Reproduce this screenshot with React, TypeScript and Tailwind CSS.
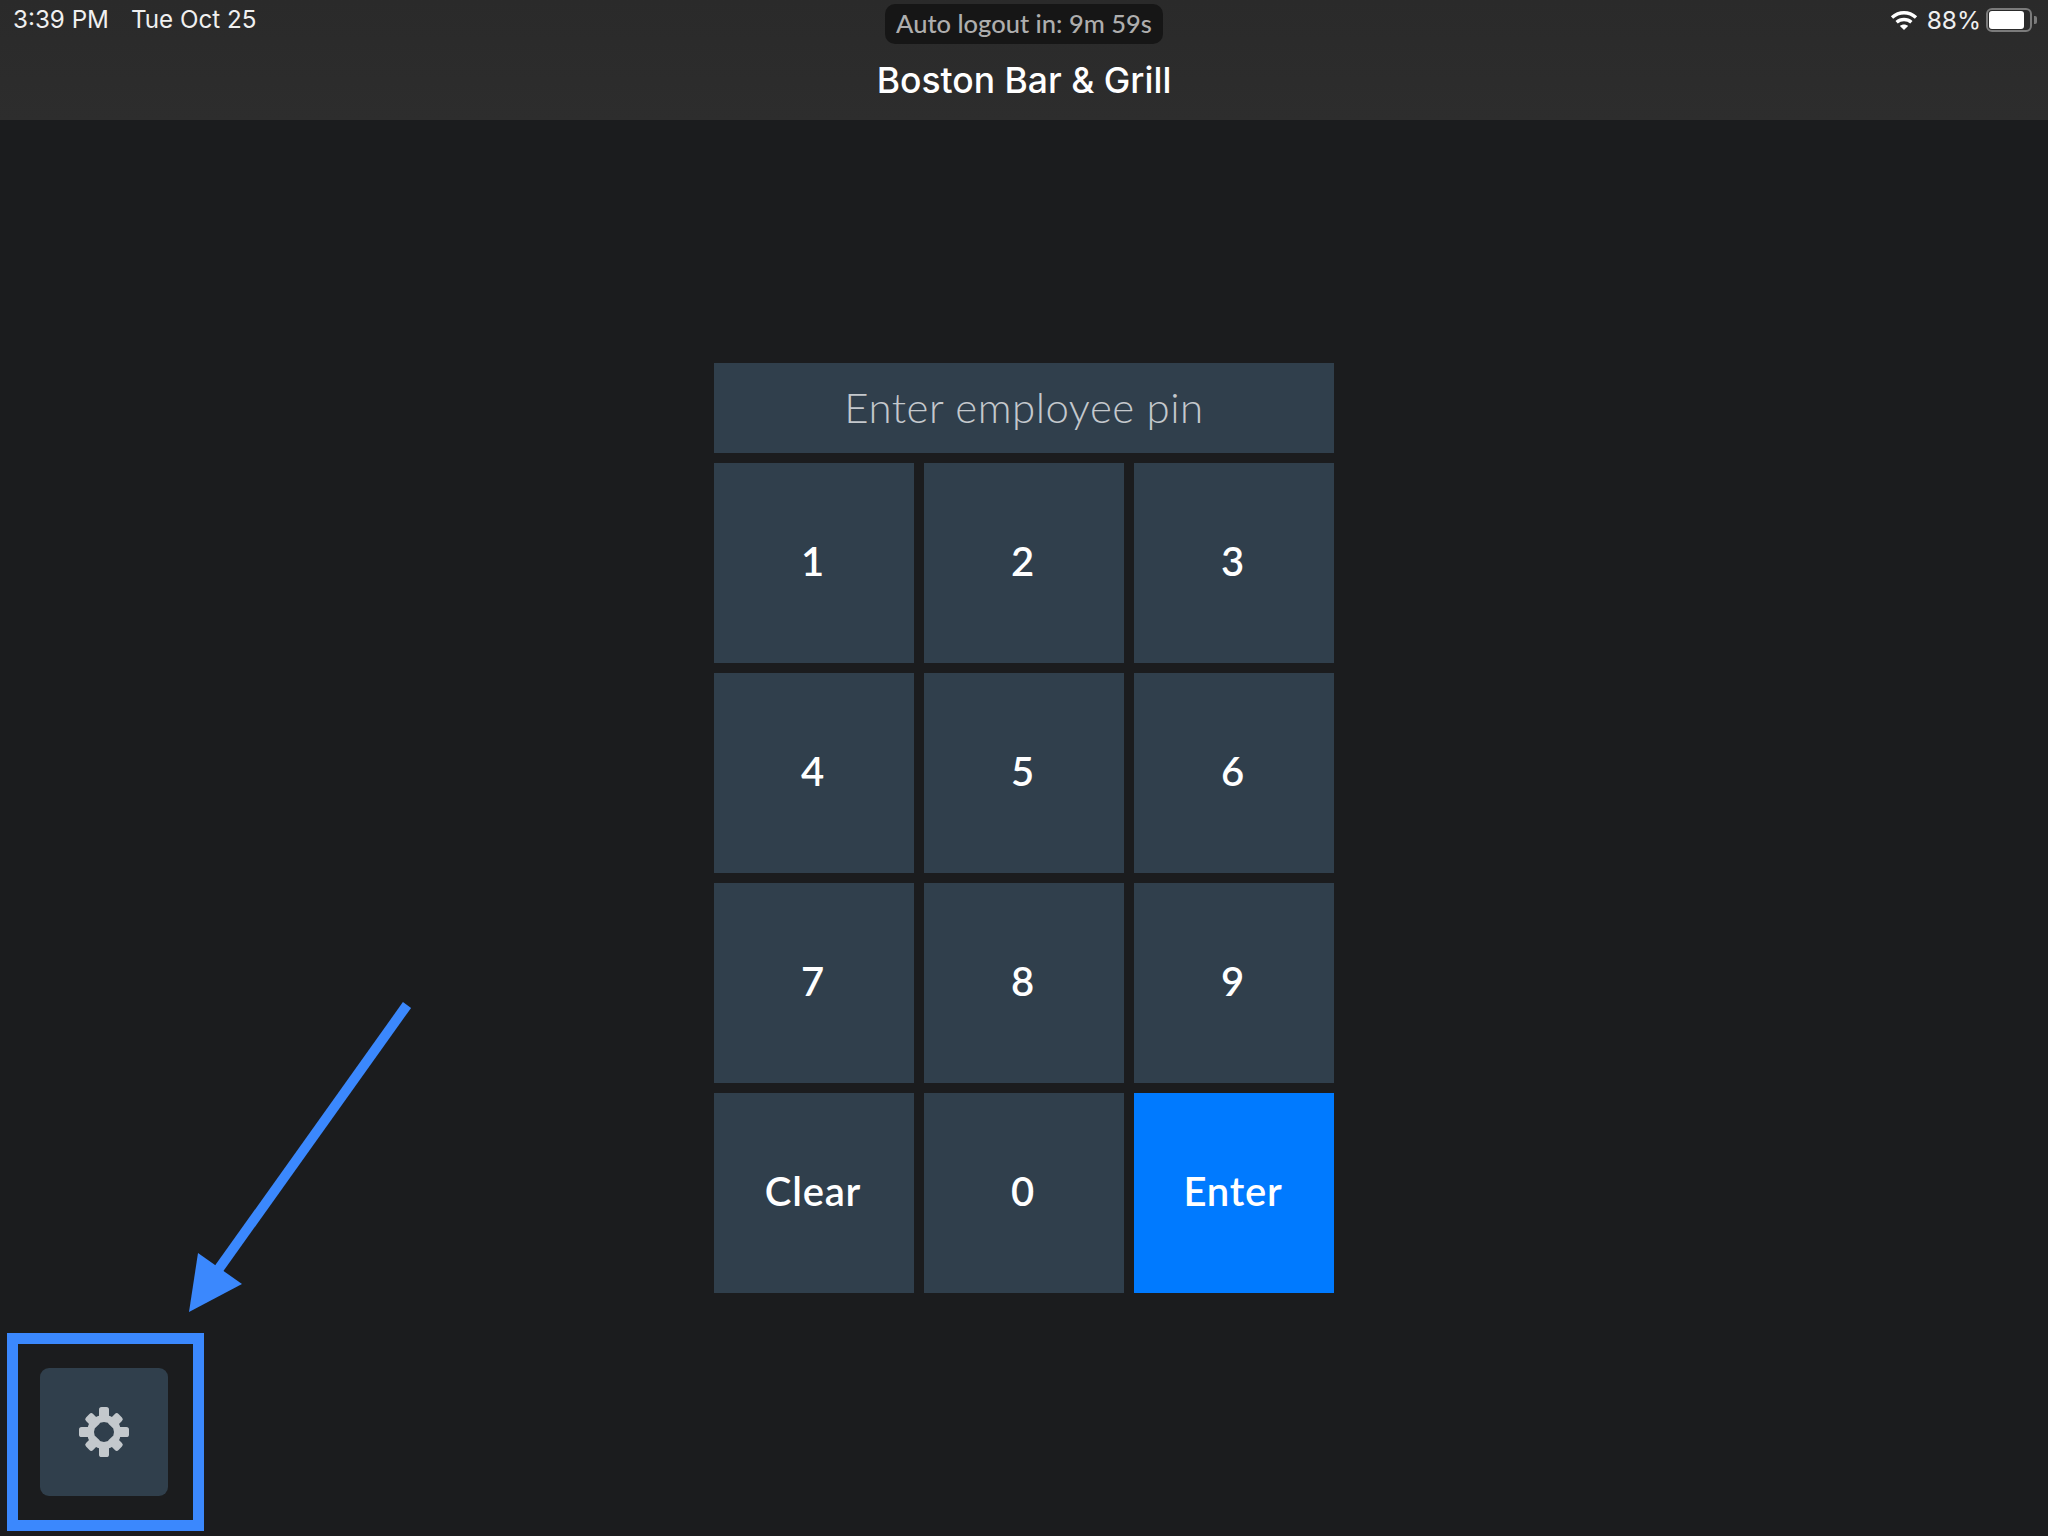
import React from "react";

function Wifi() {
  return (
    <svg width="28" height="22" viewBox="0 0 28 22" fill="none" stroke="#fff" strokeWidth="3.4">
      <path d="M2 8.5C9 2.2 19 2.2 26 8.5" />
      <path d="M6.6 13.2C10.8 9.5 17.2 9.5 21.4 13.2" />
      <path d="M14 21 9.9 16.9c2.3-2 5.9-2 8.2 0Z" fill="#fff" stroke="none" />
    </svg>
  );
}

function Battery() {
  return (
    <div className="ml-[-4px] flex items-center gap-[2px]">
      <div className="h-[24px] w-[46px] rounded-[6px] border-2 border-[#7b7b7b] p-[1px]">
        <div className="h-full w-[35px] rounded-[3px] bg-white" />
      </div>
      <div className="h-[8px] w-[3px] rounded-r-[2px] bg-[#7b7b7b]" />
    </div>
  );
}

function Gear() {
  const straight = [0, 90, 180, 270];
  const diagonal = [45, 135, 225, 315];
  return (
    <svg width="50" height="50" viewBox="0 0 50 50">
      {straight.map((a) => (
        <rect key={a} x="20" y="0" width="10" height="14" rx="2.6" fill="#c3c8cc" transform={`rotate(${a} 25 25)`} />
      ))}
      {diagonal.map((a) => (
        <rect key={a} x="20" y="2" width="10" height="14" rx="2.6" fill="#c3c8cc" transform={`rotate(${a} 25 25)`} />
      ))}
      <circle cx="25" cy="25" r="13.5" fill="none" stroke="#c3c8cc" strokeWidth="7" />
    </svg>
  );
}

function Key({ label, primary }: { label: string; primary?: boolean }) {
  return (
    <button
      className={`flex h-[200px] w-[200px] items-center justify-center pb-[4px] pr-[2px] text-white font-semibold text-[40px] tracking-[0.8px] ${
        primary ? "bg-[#007aff]" : "bg-[#303f4c]"
      }`}
    >
      {label}
    </button>
  );
}

export default function App() {
  const keys = ["1", "2", "3", "4", "5", "6", "7", "8", "9", "Clear", "0"];
  return (
    <div className="relative flex h-[1536px] w-[2048px] flex-col overflow-hidden bg-[#1b1c1e] font-['Lato',sans-serif]">
      <header className="relative flex h-[120px] flex-col items-center bg-gradient-to-b from-[#2a2a2a] to-[#2d2d2d] font-['Inter',sans-serif]">
        <div className="absolute left-[13px] top-[5px] flex gap-[22px] text-[24.2px] leading-[30px] text-[#f0f0f0]">
          <span>3:39 PM</span>
          <span>Tue Oct 25</span>
        </div>
        <div className="absolute right-[11px] top-[5px] flex h-[30px] items-center gap-[9px] text-[24.5px] text-[#f0f0f0]">
          <Wifi />
          <span>88%</span>
          <Battery />
        </div>
        <div className="mt-[4px] flex h-[40px] w-[278px] items-center justify-center rounded-[10px] bg-[#161616] pb-[1px] font-['Lato',sans-serif] text-[25.5px] font-medium text-[#aeaeae]">
          Auto logout in: 9m 59s
        </div>
        <h1 className="mt-[15px] text-[35.5px] leading-[44px] font-medium text-white">Boston Bar &amp; Grill</h1>
      </header>

      <main className="flex flex-1 flex-col">
        <section className="mt-[243px] flex w-[620px] flex-col gap-[10px] self-center">
          <div className="flex h-[90px] items-center justify-center bg-[#303f4c] pb-[2px] text-[42px] font-light tracking-[0.5px] text-[#c4c8cc]">
            Enter employee pin
          </div>
          <div className="grid grid-cols-3 gap-[10px]">
            {keys.map((k) => (
              <Key key={k} label={k} />
            ))}
            <Key label="Enter" primary />
          </div>
        </section>
        <button className="ml-[40px] mt-[75px] flex h-[128px] w-[128px] items-center justify-center rounded-[9px] bg-[#303f4c]">
          <Gear />
        </button>
      </main>

      {/* Annotation overlays */}
      <div className="absolute left-[7px] top-[1333px] h-[198px] w-[197px] border-[11px] border-[#3b88fd]" />
      <svg className="absolute left-0 top-0" width="2048" height="1536" fill="none">
        <line x1="407" y1="1005" x2="218" y2="1270" stroke="#3b88fd" strokeWidth="10" />
        <polygon points="189,1312 198,1253 242,1284" fill="#3b88fd" />
      </svg>
    </div>
  );
}
